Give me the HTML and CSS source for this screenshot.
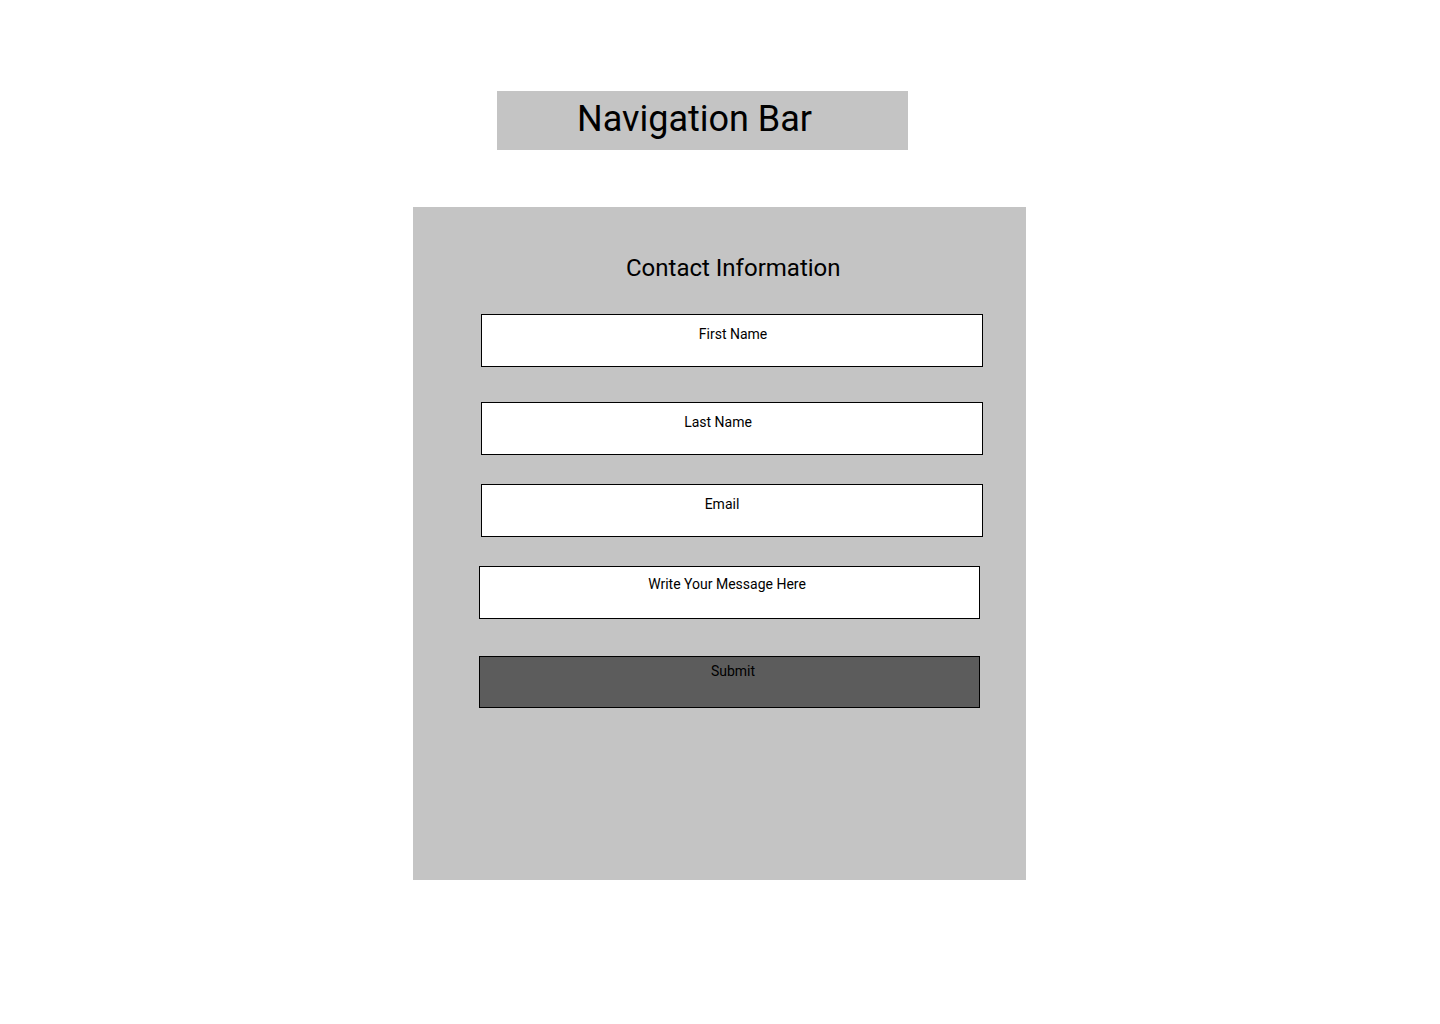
FILE: index.html
```html
<!DOCTYPE html>
<html lang="en">
<head>
<meta charset="utf-8">
<title>Contact</title>
<link rel="stylesheet" href="styles.css">
</head>
<body>
<div class="page">
  <nav class="navbar"><span class="nav-title">Navigation Bar</span></nav>
  <section class="card">
    <h1 class="card-title">Contact Information</h1>
    <form class="form">
      <div class="field field-first">First Name</div>
      <div class="field field-last">Last Name</div>
      <div class="field field-email">Email</div>
      <div class="field field-message">Write Your Message Here</div>
      <div class="field field-submit">Submit</div>
    </form>
  </section>
</div>
</body>
</html>
```

FILE: styles.css
```css
html, body {
  margin: 0;
  padding: 0;
  background: #ffffff;
}
body {
  font-family: Roboto, "Liberation Sans", sans-serif;
  color: #000;
}
.page {
  display: flex;
  flex-direction: column;
  align-items: flex-start;
  padding-top: 91px;
}
.navbar {
  box-sizing: border-box;
  margin-left: 497px;
  width: 411px;
  height: 59px;
  background: #c4c4c4;
  padding: 7px 0 0 80px;
}
.nav-title {
  font-size: 36px;
  line-height: 42px;
  font-weight: 400;
}
.card {
  box-sizing: border-box;
  margin-left: 413px;
  margin-top: 57px;
  width: 613px;
  height: 673px;
  background: #c4c4c4;
  padding-top: 47px;
}
.card-title {
  margin: 0;
  font-size: 24px;
  line-height: 28px;
  font-weight: 400;
  padding-left: 213px;
}
.form {
  display: flex;
  flex-direction: column;
  margin-top: 32px;
}
.field {
  box-sizing: border-box;
  height: 53px;
  width: 502px;
  margin-left: 68px;
  background: #ffffff;
  border: 1px solid #000;
  font-size: 14px;
  line-height: 16px;
  padding-top: 11px;
  text-align: center;
}
.field-first {
  padding-left: 2px;
}
.field-last {
  margin-top: 35px;
  padding-right: 28px;
}
.field-email {
  margin-top: 29px;
  padding-right: 20px;
}
.field-message {
  margin-top: 29px;
  margin-left: 66px;
  width: 501px;
  padding-top: 9px;
  padding-right: 5px;
}
.field-submit {
  margin-top: 37px;
  margin-left: 66px;
  width: 501px;
  height: 52px;
  background: #5c5c5c;
  padding-top: 6px;
  padding-left: 7px;
}
```
